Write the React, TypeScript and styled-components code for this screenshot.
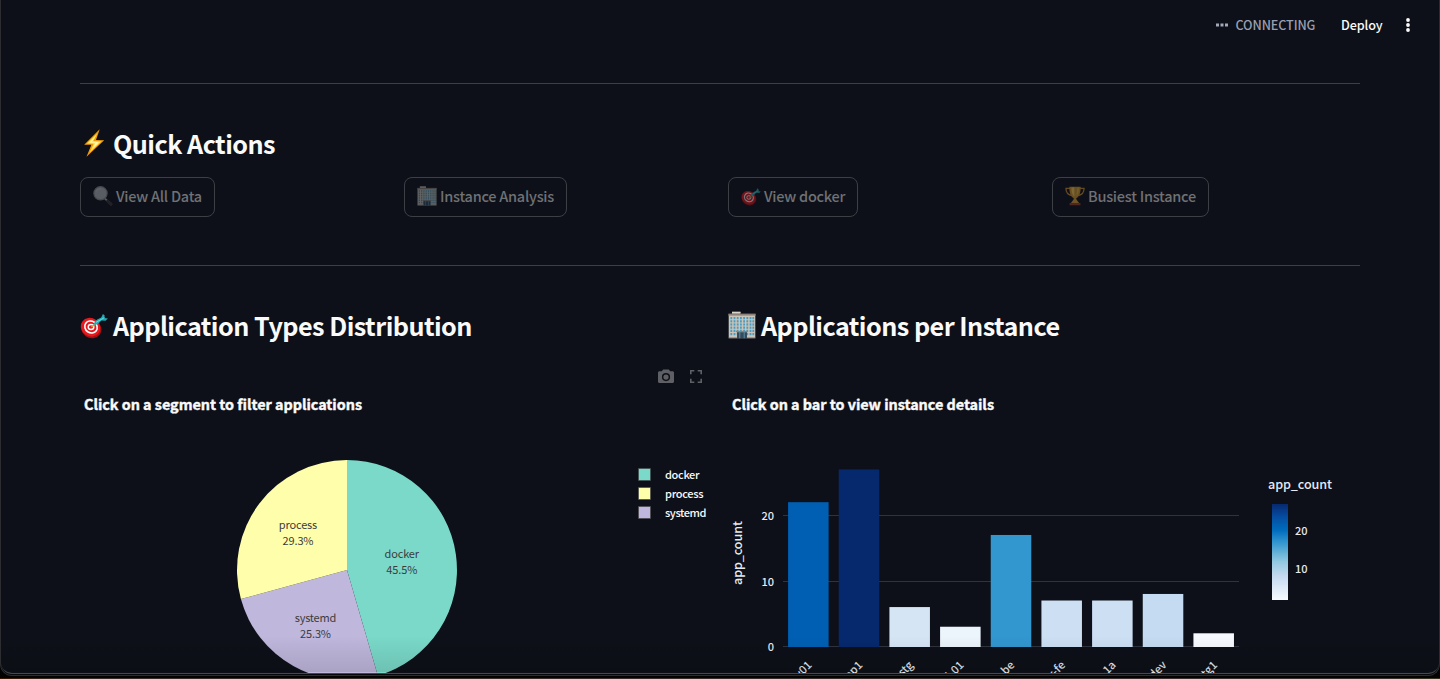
import React from "react";
import styled, { createGlobalStyle } from "styled-components";

const FONT = '"Source Sans Pro", "Noto Sans CJK SC", "Noto Sans CJK JP", sans-serif';

const Global = createGlobalStyle`
  * { box-sizing: border-box; }
  html, body { margin: 0; padding: 0; background: #040405; overflow: hidden; }
  body { font-family: ${FONT}; color: #fafafa; }
  svg { display: block; }
  svg text { font-family: ${FONT}; }
`;

const Desktop = styled.div`
  height: 679px;
  overflow: hidden;
  background: linear-gradient(90deg, #3b1604 0, #3a2c28 60px, #3a3030 1380px, #37321c 1440px) 0 678px / 100% 1px no-repeat, #030304;
`;

const Window = styled.div`
  position: relative;
  height: 676px;
  border: 1px solid #2b2d31;
  border-top: 0;
  border-radius: 0 0 12px 12px;
  padding-bottom: 1px;
  background: #08090b;
`;

const Page = styled.main`
  display: flex;
  flex-direction: column;
  height: 674px;
  overflow: hidden;
  padding: 0 79px;
  background: #0d1018;
  border-bottom: 1px solid #45484c;
  border-radius: 0 0 11px 11px;
`;

const Header = styled.header`
  display: flex;
  align-items: center;
  justify-content: flex-end;
  flex: none;
  height: 50px;
  margin: 0 -54px 33px 0;
  line-height: 20px;
`;

const Status = styled.span<{ $w: number }>`
  width: ${(p) => p.$w}px;
  margin-left: 8px;
  font-size: 12.6px;
  font-weight: 500;
  letter-spacing: -0.1px;
  color: #9a9fb0;
  white-space: nowrap;
`;

const Deploy = styled.span`
  width: 42px;
  margin: 0 19px 0 25.5px;
  font-size: 12.6px;
  font-weight: 500;
  letter-spacing: -0.1px;
  white-space: nowrap;
`;

const Rule = styled.hr`
  flex: none;
  width: 100%;
  height: 1px;
  margin: 0;
  border: 0;
  background: #3c3f44;
`;

const Heading = styled.h3`
  display: flex;
  align-items: center;
  gap: 5px;
  height: 34px;
  margin: 0;
  font-size: 25.2px;
  font-weight: 700;
  letter-spacing: -0.54px;
  line-height: 34px;
  white-space: nowrap;
`;

const QuickSection = styled.section`
  flex: none;
  height: 181px;
  padding-top: 42px;
`;

const ButtonGrid = styled.div`
  display: grid;
  grid-template-columns: repeat(4, 308px);
  gap: 16px;
  margin-top: 17px;
`;

const ActionButton = styled.button<{ $w: number }>`
  display: flex;
  align-items: center;
  gap: 3px;
  width: ${(p) => p.$w}px;
  height: 40px;
  padding: 0 0 3px 12px;
  border: 1px solid #3c3f44;
  border-radius: 8px;
  background: transparent;
  color: #6f7175;
  font: 500 14.5px ${FONT};
  letter-spacing: -0.25px;
  white-space: nowrap;
  & > svg { opacity: 0.45; flex: none; }
`;

const Charts = styled.section`
  display: grid;
  grid-template-columns: 632px 632px;
  gap: 16px;
  padding-top: 42px;
`;

const Chart = styled.svg`
  margin-top: 18px;
`;

const BottomShade = styled.div`
  position: absolute;
  left: 0;
  right: 0;
  bottom: 3px;
  height: 36px;
  border-radius: 0 0 11px 11px;
  background: linear-gradient(rgba(0, 0, 0, 0), rgba(0, 0, 0, 0.11));
`;

type EmojiProps = { size: number };

const Bolt = ({ size }: EmojiProps) => (
  <svg width={size} height={size} viewBox="0 0 28 28">
    <path d="M19.7.2 4.2 15.7l7.2.1-4.9 12 17.7-16.5-8.2-.3z" fill="#f39a0b" />
    <path d="M17.3 4.6 7 14.5l6.8.2-4 8.5 11.5-10.8-8-.3z" fill="#ffe34b" />
    <path d="m15.7 7-6.4 6.5 6.3.3-2.6 5.4 5.8-5.9-7.1-.2z" fill="#fff9be" />
  </svg>
);

const Lens = ({ size }: EmojiProps) => (
  <svg width={size} height={size} viewBox="0 0 28 28">
    <path d="m18 17 8.5 7.2c1.7 1.7-1 4.3-2.7 2.6L16 18.6z" fill="#343434" stroke="#555" strokeWidth=".7" />
    <path d="m16 17 3.2 3" stroke="#b3b7bc" strokeWidth="2" />
    <circle cx="10.5" cy="10.2" r="9.3" fill="#b4b8bf" stroke="#8b8e94" strokeWidth="1.6" />
    <path d="M4 9a7 7 0 0 1 7-5" fill="none" stroke="#c2c8ce" strokeWidth="1.5" />
  </svg>
);

const Building = ({ size }: EmojiProps) => (
  <svg width={size} height={size} viewBox="0 0 28 28">
    <path d="M4 .8h8.5V4H4z" fill="#b8b3aa" />
    <path d="M4 .8h8.5v1H4z" fill="#e0ddd5" />
    <path d="M.7 3.2h26.6v24H.7z" fill="#cac5ba" />
    <path d="M.4 2.6h27.2v2H.4z" fill="#8d837a" />
    {[6, 9.2, 12.4, 15.6, 18.8, 22].map((y) =>
      [2.4, 5.6, 8.8, 12, 15.2, 18.4, 21.6, 24.4].map((x) => (
        <path key={`${x}-${y}`} d={`M${x} ${y}h1.8v2.2h-1.8z`} fill="#4b9bc1" />
      ))
    )}
    <path d="M8 19.8h12v1.4H8z" fill="#8d837a" />
    <path d="M9 21.2h10v6H9z" fill="#304c5e" />
    <path d="M11.8 21.2v6M16.2 21.2v6" stroke="#729cb1" strokeWidth=".8" />
    <path d="M.7 26.8h8.2M19 26.8h8.3" stroke="#777" strokeWidth=".8" />
  </svg>
);

const Target = ({ size }: EmojiProps) => (
  <svg width={size} height={size} viewBox="0 0 28 28">
    <ellipse cx="11.2" cy="17.4" rx="10.5" ry="9.5" transform="rotate(35 11.2 17.4)" fill="#a80f13" />
    <ellipse cx="10.5" cy="16.2" rx="10" ry="9" transform="rotate(35 10.5 16.2)" fill="#e51a1e" />
    <ellipse cx="11" cy="16" rx="6.4" ry="5.8" transform="rotate(35 11 16)" fill="none" stroke="#fff" strokeWidth="1.6" />
    <ellipse cx="11" cy="16" rx="2.8" ry="2.5" fill="#e51a1e" stroke="#fff" strokeWidth="1.4" />
    <path d="m11.5 16 4.2-3.4" stroke="#d79c35" strokeWidth="1.6" />
    <path d="m14 12 3.2-3.4 4-2 1.7-3.6 1.8 1.4-.4 2.6 3.6.6-2.4 2.2-4-.2-3.2 3-3.7 1.8z" fill="#22aab4" />
    <path d="m16 11.4 8.5-4.9" stroke="#73e0e4" strokeWidth=".9" />
  </svg>
);

const Trophy = ({ size }: EmojiProps) => (
  <svg width={size} height={size} viewBox="0 0 28 28">
    <path d="M7 3.2H1.3c0 6.3 2.3 9 8.1 10.1M21 3.2h5.7c0 6.3-2.3 9-8.1 10.1" fill="none" stroke="#d3902b" strokeWidth="1.8" />
    <path d="M6 1h16c0 8-1.6 13.7-6.2 16v4.5h-3.6V17C7.6 14.7 6 9 6 1z" fill="#d99a2c" />
    <path d="M9 2h4v13C10 12 9 8 9 2z" fill="#ffd55c" />
    <path d="M17.5 2h2c0 6-1 9-3.5 12z" fill="#f3bc47" />
    <path d="m12 19-4 5h12l-4-5z" fill="#e2a63b" />
    <path d="M6.4 23.8h15.2V27H6.4z" fill="#a64030" />
  </svg>
);

const slice = (from: number, to: number) => {
  const point = (f: number) => {
    const a = f * Math.PI * 2;
    return `${(347 + 110 * Math.sin(a)).toFixed(2)} ${(570 - 110 * Math.cos(a)).toFixed(2)}`;
  };
  return `M347 570L${point(from)}A110 110 0 0 1 ${point(to)}Z`;
};

const slices = [
  { name: "docker", share: "45.5%", from: 0, to: 0.4548, fill: "#7ad9c9", x: 401.8, y: 558, w: 34.5 },
  { name: "systemd", share: "25.3%", from: 0.4548, to: 0.7075, fill: "#bfb7dc", x: 315.5, y: 622, w: 41.5 },
  { name: "process", share: "29.3%", from: 0.7075, to: 1, fill: "#ffffab", x: 298, y: 529, w: 38.5 },
];

const legend = [
  { name: "docker", fill: "#7ad9c9", w: 34.5 },
  { name: "process", fill: "#ffffab", w: 38.5 },
  { name: "systemd", fill: "#bfb7dc", w: 41.5 },
];

const ChartTitle = styled.text`
  font-size: 14.4px;
  font-weight: 700;
  fill: #fafafa;
  stroke: #fafafa;
  stroke-width: 0.4px;
`;

const PieChart = () => (
  <Chart width="632" height="313" viewBox="80 360 632 313">
    <g fill="#5e6065">
      <path
        fillRule="evenodd"
        d="M663.2 369.5h5.6l1.4 1.7h2.3c.9 0 1.5.7 1.5 1.5v8.8c0 .9-.6 1.5-1.5 1.5h-13c-.9 0-1.5-.6-1.5-1.5v-8.8c0-.8.6-1.5 1.5-1.5h2.3zM666 373a4.1 4.1 0 1 0 0 8.2 4.1 4.1 0 0 0 0-8.2z"
      />
      <circle cx="666" cy="377.1" r="2.6" />
    </g>
    <path d="M690.8 374.3v-3.5h3.5M697.7 370.8h3.5v3.5M701.2 378.7v3.5h-3.5M694.3 382.2h-3.5v-3.5" fill="none" stroke="#5e6065" strokeWidth="1.6" />
    <ChartTitle x="84" y="410" textLength="278">Click on a segment to filter applications</ChartTitle>
    {slices.map((s) => (
      <g key={s.name}>
        <path d={slice(s.from, s.to)} fill={s.fill} />
        <g fontSize="11" fill="#3c3c3c" textAnchor="middle">
          <text x={s.x} y={s.y} textLength={s.w}>{s.name}</text>
          <text x={s.x} y={s.y + 16} textLength="31">{s.share}</text>
        </g>
      </g>
    ))}
    {legend.map((l, i) => (
      <g key={l.name}>
        <rect x="638.5" y={468.5 + i * 19} width="12" height="12" fill={l.fill} stroke="#444" strokeOpacity=".6" />
        <text x="665" y={479 + i * 19} fontSize="11" fontWeight="500" fill="#fafafa" textLength={l.w}>{l.name}</text>
      </g>
    ))}
  </Chart>
);

const bars = [
  { value: 22, fill: "#005fb3", label: "v01" },
  { value: 27, fill: "#06296e", label: "pp1" },
  { value: 6, fill: "#d5e5f4", label: "stg" },
  { value: 3, fill: "#ecf4fc", label: "l-01" },
  { value: 17, fill: "#3296cf", label: "-be" },
  { value: 7, fill: "#cddff3", label: "r-fe" },
  { value: 7, fill: "#cddff3", label: "-1a" },
  { value: 8, fill: "#c5dbf1", label: "dev" },
  { value: 2, fill: "#f7fbff", label: "stg1" },
];

const BASE = 646.7;
const UNIT = 6.555;
const STEP = 50.67;

const BarChart = () => (
  <Chart width="632" height="313" viewBox="728 360 632 313">
    <defs>
      <linearGradient id="scale" x1="0" y1="1" x2="0" y2="0">
        <stop offset="0" stopColor="#f7fbff" />
        <stop offset=".25" stopColor="#c5daf0" />
        <stop offset=".4" stopColor="#91c9e1" />
        <stop offset=".6" stopColor="#3296cf" />
        <stop offset=".73" stopColor="#006bbc" />
        <stop offset=".87" stopColor="#054ca0" />
        <stop offset="1" stopColor="#06296e" />
      </linearGradient>
    </defs>
    <ChartTitle x="732" y="410" textLength="262">Click on a bar to view instance details</ChartTitle>
    {[0, 10, 20].map((t) => (
      <g key={t}>
        <path d={`M783 ${Math.floor(BASE - t * UNIT) + 0.5}H1239`} stroke="#30333d" />
        <text x="774" y={BASE - t * UNIT + 4.5} fontSize="11" fontWeight="500" fill="#e6eaf1" textAnchor="end">{t}</text>
      </g>
    ))}
    <text transform="translate(742 585) rotate(-90)" fontSize="12.6" fontWeight="500" fill="#e6eaf1" textLength="64">app_count</text>
    {bars.map((b, i) => (
      <g key={i}>
        <rect x={788.07 + i * STEP} y={BASE - 0.3 - b.value * UNIT} width="40.53" height={b.value * UNIT + 0.6} fill={b.fill} />
        <text transform={`translate(${812.6 + i * STEP} 665.8) rotate(-45)`} fontSize="11.2" fontWeight="500" fill="#e6eaf1" textAnchor="end">{b.label}</text>
      </g>
    ))}
    <text x="1268" y="489" fontSize="12.6" fontWeight="500" fill="#e6eaf1" textLength="64">app_count</text>
    <rect x="1272" y="504" width="16" height="96" fill="url(#scale)" />
    <text x="1295" y="535.4" fontSize="11" fontWeight="500" fill="#e6eaf1">20</text>
    <text x="1295" y="573.4" fontSize="11" fontWeight="500" fill="#e6eaf1">10</text>
  </Chart>
);

const actions = [
  { label: "View All Data", Icon: Lens, w: 135 },
  { label: "Instance Analysis", Icon: Building, w: 163 },
  { label: "View docker", Icon: Target, w: 130 },
  { label: "Busiest Instance", Icon: Trophy, w: 157 },
];

export default function App() {
  return (
    <Desktop>
      <Global />
      <Window>
        <Page>
          <Header>
            <svg width="12" height="4" viewBox="0 0 12 4" fill="#a3a8b8">
              <path d="M0 .5h3v3H0zM4.5.5h3v3h-3zM9 .5h3v3H9z" />
            </svg>
            <Status $w={80}>CONNECTING</Status>
            <Deploy>Deploy</Deploy>
            <svg width="12" height="16" viewBox="0 0 12 16" fill="#fafafa">
              <circle cx="6" cy="3" r="1.9" />
              <circle cx="6" cy="8" r="1.9" />
              <circle cx="6" cy="13" r="1.9" />
            </svg>
          </Header>
          <Rule />
          <QuickSection>
            <Heading><Bolt size={28} />Quick Actions</Heading>
            <ButtonGrid>
              {actions.map(({ label, Icon, w }) => (
                <ActionButton key={label} $w={w}><Icon size={20} />{label}</ActionButton>
              ))}
            </ButtonGrid>
          </QuickSection>
          <Rule />
          <Charts>
            <div>
              <Heading><Target size={28} />Application Types Distribution</Heading>
              <PieChart />
            </div>
            <div>
              <Heading><Building size={28} />Applications per Instance</Heading>
              <BarChart />
            </div>
          </Charts>
        </Page>
        <BottomShade />
      </Window>
    </Desktop>
  );
}
